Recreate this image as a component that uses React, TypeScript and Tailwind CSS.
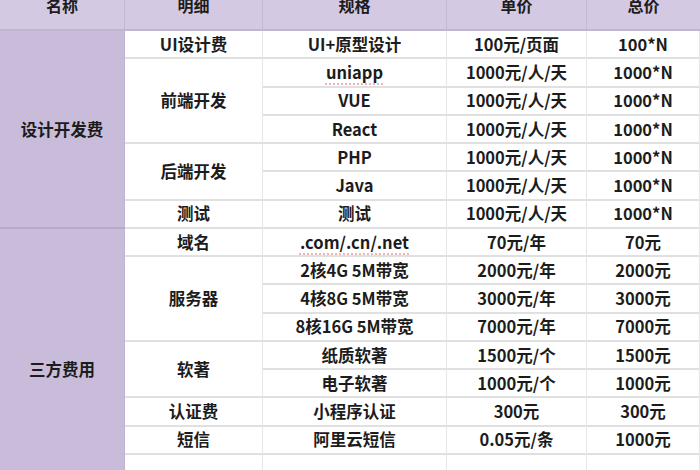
import React from "react";

type Cell = { text: string; col: number; row: number; span?: number; spell?: boolean };

const ROWS = 17;

const cells: Cell[] = [
  { text: "设计开发费", col: 1, row: 1, span: 7 },
  { text: "三方费用", col: 1, row: 8, span: 10 },

  { text: "UI设计费", col: 2, row: 1 },
  { text: "前端开发", col: 2, row: 2, span: 3 },
  { text: "后端开发", col: 2, row: 5, span: 2 },
  { text: "测试", col: 2, row: 7 },
  { text: "域名", col: 2, row: 8 },
  { text: "服务器", col: 2, row: 9, span: 3 },
  { text: "软著", col: 2, row: 12, span: 2 },
  { text: "认证费", col: 2, row: 14 },
  { text: "短信", col: 2, row: 15 },
  { text: "", col: 2, row: 16 },
  { text: "", col: 2, row: 17 },
];

const spec: [string, string, string, boolean?][] = [
  ["UI+原型设计", "100元/页面", "100*N"],
  ["uniapp", "1000元/人/天", "1000*N", true],
  ["VUE", "1000元/人/天", "1000*N"],
  ["React", "1000元/人/天", "1000*N"],
  ["PHP", "1000元/人/天", "1000*N"],
  ["Java", "1000元/人/天", "1000*N"],
  ["测试", "1000元/人/天", "1000*N"],
  [".com/.cn/.net", "70元/年", "70元", true],
  ["2核4G 5M带宽", "2000元/年", "2000元"],
  ["4核8G 5M带宽", "3000元/年", "3000元"],
  ["8核16G 5M带宽", "7000元/年", "7000元"],
  ["纸质软著", "1500元/个", "1500元"],
  ["电子软著", "1000元/个", "1000元"],
  ["小程序认证", "300元", "300元"],
  ["阿里云短信", "0.05元/条", "1000元"],
  ["", "", ""],
  ["", "", ""],
];

spec.forEach((r, i) => {
  cells.push({ text: r[0], col: 3, row: i + 1, spell: r[3] });
  cells.push({ text: r[1], col: 4, row: i + 1 });
  cells.push({ text: r[2], col: 5, row: i + 1 });
});

const headers = ["名称", "明细", "规格", "单价", "总价"];

export default function App() {
  return (
    <div
      className="w-[700px] h-[470px] overflow-hidden bg-white text-[#1c1c1c] font-bold"
      style={{ fontFamily: '"Noto Sans CJK SC", "Noto Sans", sans-serif' }}
    >
      <div className="grid grid-cols-[125px_138px_184px_140px_113px]">
        {headers.map((h, i) => (
          <div
            key={h}
            className={`h-[31px] bg-[#d4c9e2] border-b-2 border-[#c2b5d3] flex justify-center items-start pt-0 text-[16px] leading-[12px] ${
              i < 4 ? "border-r border-r-[#c4b8d6]" : ""
            }`}
          >
            <span className="-mt-[1px]">{h}</span>
          </div>
        ))}
      </div>
      <div
        className="grid grid-cols-[125px_138px_184px_140px_113px]"
        style={{ gridTemplateRows: `repeat(${ROWS}, 28.25px)` }}
      >
        {cells.map((c, i) => {
          const purple = c.col === 1;
          return (
            <div
              key={i}
              style={{
                gridColumn: `${c.col} / span 1`,
                gridRow: `${c.row} / span ${c.span ?? 1}`,
              }}
              className={`flex items-center justify-center text-[16.5px] leading-none whitespace-nowrap ${
                purple
                  ? "bg-[#c8bcda] border-b-2 border-[#b7aac9] border-r border-r-[#bfb2d2]"
                  : "bg-white border-b-2 border-[#e0e0e0] border-r border-r-[#e6e6e6]"
              }`}
            >
              {c.spell ? (
                <span className="underline decoration-dotted decoration-[#e8a0a0] underline-offset-[5px]">
                  {c.text}
                </span>
              ) : (
                c.text
              )}
            </div>
          );
        })}
      </div>
    </div>
  );
}
